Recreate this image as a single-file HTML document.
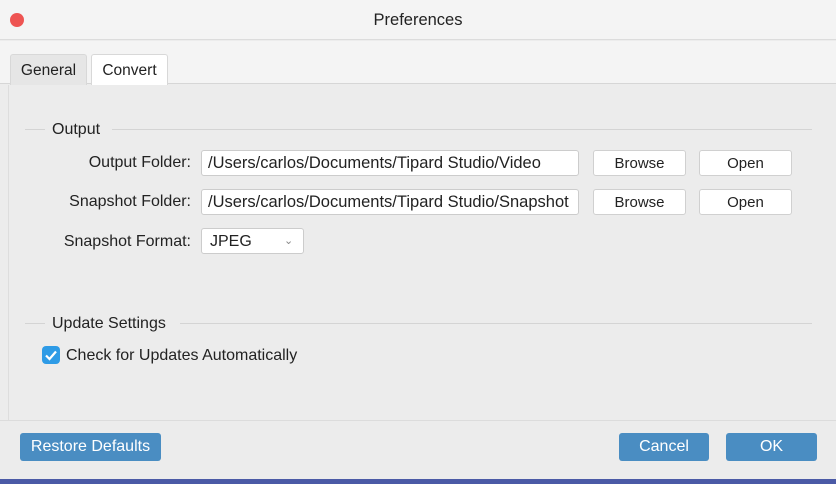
<!DOCTYPE html>
<html><head><style>
*{margin:0;padding:0;box-sizing:border-box}
body{width:836px;height:484px;background:#ececec;font-family:"Liberation Sans",sans-serif;color:#222;position:relative;overflow:hidden;font-size:16px}
.a{position:absolute}
.title{left:0;top:0;width:836px;height:40px;background:#f4f4f4;border-bottom:1px solid #dcdcdc;text-align:center;line-height:41px;font-size:16.5px}
.dot{left:10px;top:13px;width:14px;height:14px;border-radius:50%;background:#ee5452}
.tabbar{left:0;top:41px;width:836px;height:43px;background:#f4f4f4;border-bottom:1px solid #d6d6d6}
.tab{top:54px;height:31px;line-height:31px;text-align:center;font-size:15.5px;border:1px solid #d8d8d8;border-bottom:none;border-radius:3px 3px 0 0}
.line{height:1px;background:#d4d4d4}
.lbl{width:191px;text-align:right;font-size:16px}
.inp{left:201px;width:378px;height:26px;background:#fff;border:1px solid #ccc;border-radius:3px;line-height:25px;padding-left:6px;font-size:16.5px;white-space:nowrap;overflow:hidden}
.btn{height:26px;width:93px;background:#fff;border:1px solid #d0d0d0;border-radius:3px;text-align:center;line-height:25px;font-size:15px}
.pb{top:433px;height:28px;background:#4a8dc2;color:#fff;border-radius:3px;text-align:center;line-height:28px;font-size:16px}
</style></head><body>
<div class="a title">Preferences</div>
<div class="a dot"></div>
<div class="a tabbar"></div>
<div class="a tab" style="left:10px;width:77px;background:#e6e6e6">General</div>
<div class="a tab" style="left:91px;width:77px;background:#fff">Convert</div>
<div class="a" style="left:8px;top:85px;width:1px;height:335px;background:#ddd"></div>
<div class="a line" style="left:25px;top:129px;width:20px"></div>
<div class="a" style="left:52px;top:121px">Output</div>
<div class="a line" style="left:112px;top:129px;width:700px"></div>
<div class="a lbl" style="top:154px;left:0">Output Folder:</div>
<div class="a inp" style="top:150px">/Users/carlos/Documents/Tipard Studio/Video</div>
<div class="a btn" style="left:593px;top:150px">Browse</div>
<div class="a btn" style="left:699px;top:150px">Open</div>
<div class="a lbl" style="top:193px;left:0">Snapshot Folder:</div>
<div class="a inp" style="top:189px">/Users/carlos/Documents/Tipard Studio/Snapshot</div>
<div class="a btn" style="left:593px;top:189px">Browse</div>
<div class="a btn" style="left:699px;top:189px">Open</div>
<div class="a lbl" style="top:233px;left:0">Snapshot Format:</div>
<div class="a inp" style="top:228px;width:103px;font-size:16px;padding-left:8px">JPEG<span style="position:absolute;left:82px;top:0;color:#888;font-size:11px">&#8964;</span></div>
<div class="a line" style="left:25px;top:323px;width:20px"></div>
<div class="a" style="left:52px;top:315px">Update Settings</div>
<div class="a line" style="left:180px;top:323px;width:632px"></div>
<div class="a" style="left:42px;top:346px;width:18px;height:18px;background:#2e9be6;border-radius:4px"><svg width="18" height="18"><path d="M4 9.5l3.5 3.5L14 5.5" stroke="#fff" stroke-width="2.2" fill="none"/></svg></div>
<div class="a" style="left:66px;top:347px">Check for Updates Automatically</div>
<div class="a line" style="left:0;top:420px;width:836px;background:#dcdcdc"></div>
<div class="a pb" style="left:20px;width:141px">Restore Defaults</div>
<div class="a pb" style="left:619px;width:90px">Cancel</div>
<div class="a pb" style="left:726px;width:91px">OK</div>
<div class="a" style="left:0;top:479px;width:836px;height:5px;background:#4b5aa6"></div>
</body></html>
